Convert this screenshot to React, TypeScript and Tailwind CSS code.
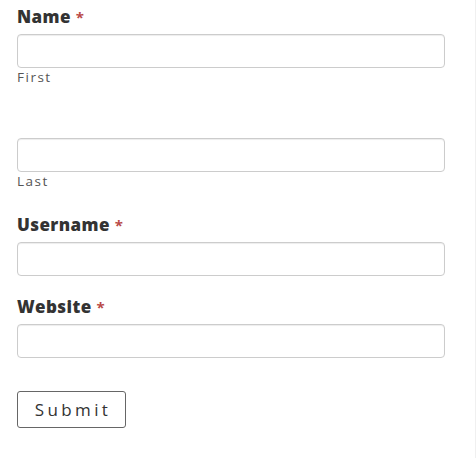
const Label = ({ text, className = "" }: { text: string; className?: string }) => (
  <label className={`block text-[17px] leading-[24px] font-extrabold text-[#333] tracking-[0.4px] ${className}`}>
    {text} <span className="text-[#b94a48] text-[15px] font-bold">*</span>
  </label>
);

const Field = () => (
  <input
    type="text"
    className="block w-full h-[34px] rounded-[4px] border border-[#ccc] bg-white shadow-[inset_0_1px_1px_rgba(0,0,0,0.075)] outline-none"
  />
);

const Sub = ({ text }: { text: string }) => (
  <div className="text-[13.5px] leading-[18px] text-[#555] tracking-[1.5px]">{text}</div>
);

export default function App() {
  return (
    <div
      className="w-[476px] h-[458px] bg-white border-r border-[#f0f0f0]"
      style={{ fontFamily: '"Open Sans", sans-serif' }}
    >
      <form className="pl-[17px] pr-[30px] pt-[5px]" onSubmit={(e) => e.preventDefault()}>
        <Label text="Name" className="mb-[5px]" />
        <Field />
        <Sub text="First" />
        <div className="h-[52px]" />
        <Field />
        <Sub text="Last" />

        <Label text="Username" className="mt-[23px] mb-[5px]" />
        <Field />

        <Label text="Website" className="mt-[19px] mb-[5px]" />
        <Field />

        <button
          type="submit"
          className="mt-[33px] w-[109px] h-[37px] rounded-[3px] border border-[#666] bg-white text-[17px] text-[#333] tracking-[3.4px] pl-[3px]"
        >
          Submit
        </button>
      </form>
    </div>
  );
}
